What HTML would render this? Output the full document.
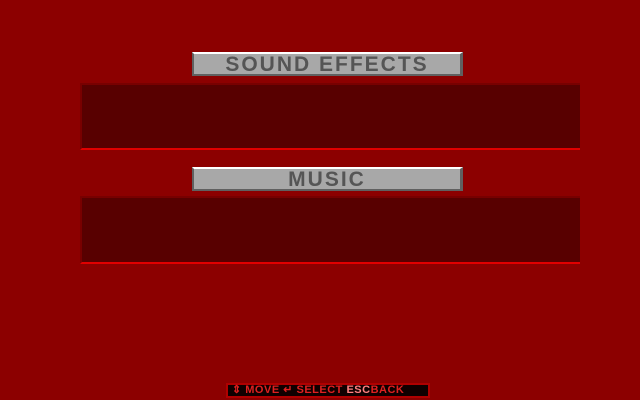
<html><head><style>
body{margin:0;width:640px;height:400px;background:#8c0000;position:relative;overflow:hidden;font-family:"Liberation Sans",sans-serif}
.lab{position:absolute;left:192px;width:266px;height:20px;background:#a8a8a8;border-top:2px solid #fff;border-left:2px solid #606060;border-right:3px solid #606060;border-bottom:2px solid #606060;color:#555;font-weight:bold;font-size:21px;text-align:center;line-height:21px;letter-spacing:2px}
.pan{position:absolute;left:80px;width:498px;background:#580000;border-top:2px solid #780000;border-left:2px solid #780000;border-bottom:2px solid #e00000}
.bar{position:absolute;left:226px;top:383px;width:196px;height:11px;background:#100000;border:2px solid #b00000;color:#e02020;font-size:11px;font-weight:bold;line-height:11px;white-space:nowrap;padding-left:4px;letter-spacing:0.5px}
</style></head><body>
<div class="lab" style="top:52px">SOUND EFFECTS</div>
<div class="pan" style="top:83px;height:63px"></div>
<div class="lab" style="top:167px">MUSIC</div>
<div class="pan" style="top:196px;height:64px"></div>
<div class="bar">⇕ MOVE ↵ SELECT <span style="color:#ff8080">ESC</span>BACK</div>
</body></html>
